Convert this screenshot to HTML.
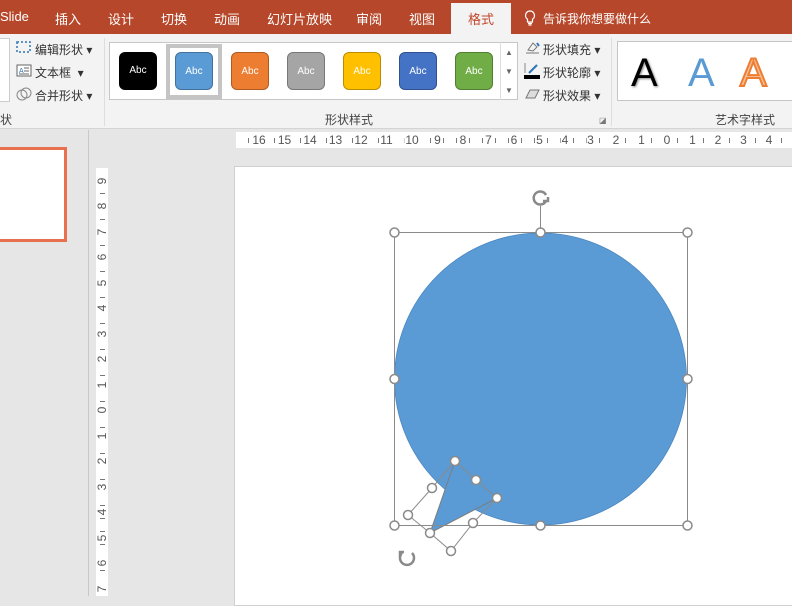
<!DOCTYPE html>
<html><head><meta charset="utf-8"><style>
*{margin:0;padding:0;box-sizing:border-box}
body{width:792px;height:596px;overflow:hidden;position:relative;background:#e6e6e6;font-family:"Liberation Sans","Noto Sans CJK SC",sans-serif;color:#333}
.abs{position:absolute}
.tabs{left:0;top:0;width:792px;height:34px;background:#b7472a}
.tab{position:absolute;top:9px;color:#fff;font-size:13px}
.ribbon{left:0;top:34px;width:792px;height:95px;background:#f3f3f3;border-bottom:1px solid #d4d4d4}
.btn{position:absolute;font-size:12px;color:#333}
.abc{position:absolute;width:38px;height:38px;border-radius:6px;color:#fff;font-size:10px;text-align:center;line-height:37px}
.lbl{position:absolute;font-size:12px;color:#444}
.hr{left:236px;top:132px;width:556px;height:16px;font-size:12px;color:#555}
.hr span{position:absolute;top:0;transform:translateX(-50%);line-height:16px;background:#fff;padding:0 1px}
.vr{left:96px;top:168px;width:12px;height:428px;font-size:12px;color:#555}
.vr span{position:absolute;left:0;width:12px;text-align:center;transform:translateY(-50%) rotate(-90deg);line-height:12px;background:#fff}
</style></head><body>
<div class="abs tabs">
<div class="tab" style="left:0">Slide</div>
<div class="tab" style="left:55px">插入</div>
<div class="tab" style="left:108px">设计</div>
<div class="tab" style="left:161px">切换</div>
<div class="tab" style="left:214px">动画</div>
<div class="tab" style="left:267px">幻灯片放映</div>
<div class="tab" style="left:356px">审阅</div>
<div class="tab" style="left:409px">视图</div>
<div class="abs" style="left:451px;top:3px;width:60px;height:31px;background:#f3f3f3"></div>
<div class="tab" style="left:468px;color:#c0462a">格式</div>
<svg class="abs" style="left:524px;top:10px" width="12" height="16" viewBox="0 0 12 16"><path d="M6 1a4.5 4.5 0 0 0-2.5 8.2V12h5V9.2A4.5 4.5 0 0 0 6 1zM4 13.5h4M4.5 15h3" fill="none" stroke="#fff" stroke-width="1.2"/></svg>
<div class="tab" style="left:543px;font-size:12px;top:10px">告诉我你想要做什么</div>
</div>
<div class="abs ribbon">
<div class="abs" style="left:0;top:4px;width:10px;height:64px;border:1px solid #ccc;border-left:none;background:#fff"></div>
<svg class="abs" style="left:16px;top:6px" width="16" height="14"><rect x="1" y="2" width="13" height="10" fill="none" stroke="#2e75b6" stroke-dasharray="2 2" stroke-width="1.5"/></svg>
<div class="btn" style="left:35px;top:7px">编辑形状 ▾</div>
<svg class="abs" style="left:16px;top:30px" width="16" height="14"><rect x="1" y="1" width="14" height="11" fill="#fff" stroke="#666"/><text x="3" y="9" font-size="7" fill="#2e75b6">A</text><path d="M8 4h5M8 7h5M3 10h10" stroke="#666"/></svg>
<div class="btn" style="left:35px;top:30px">文本框 &nbsp;▾</div>
<svg class="abs" style="left:16px;top:52px" width="16" height="16"><circle cx="6" cy="9" r="5" fill="none" stroke="#888"/><circle cx="10" cy="7" r="5" fill="none" stroke="#888"/></svg>
<div class="btn" style="left:35px;top:53px">合并形状 ▾</div>
<div class="lbl" style="left:0;top:77px">状</div>
<div class="abs" style="left:104px;top:4px;width:1px;height:88px;background:#ddd"></div>
<div class="abs" style="left:109px;top:8px;width:409px;height:58px;background:#fff;border:1px solid #c6c6c6"></div>
<div class="abs" style="left:500px;top:8px;width:1px;height:58px;background:#ddd"></div>
<div class="btn" style="left:505px;top:9px;font-size:8px;color:#666;line-height:19px">▲<br>▼<br>▼</div>
<div class="abs" style="left:166px;top:10px;width:56px;height:55px;border:4px solid #c4c4c4"></div>
<div class="abc" style="left:119px;top:18px;background:#000">Abc</div>
<div class="abc" style="left:175px;top:18px;background:#5b9bd5;border:1px solid #41719c">Abc</div>
<div class="abc" style="left:231px;top:18px;background:#ed7d31;border:1px solid #ae5a21">Abc</div>
<div class="abc" style="left:287px;top:18px;background:#a5a5a5;border:1px solid #787878">Abc</div>
<div class="abc" style="left:343px;top:18px;background:#ffc000;border:1px solid #bc8c00">Abc</div>
<div class="abc" style="left:399px;top:18px;background:#4472c4;border:1px solid #2f528f">Abc</div>
<div class="abc" style="left:455px;top:18px;background:#70ad47;border:1px solid #507e32">Abc</div>
<div class="lbl" style="left:325px;top:77px">形状样式</div>
<svg class="abs" style="left:523px;top:6px" width="18" height="16"><path d="M3 13h13M5 10l5-7 4 4-4 4z" fill="none" stroke="#777"/><path d="M14 3l2 3" stroke="#2e75b6" stroke-width="2"/></svg>
<div class="btn" style="left:543px;top:7px">形状填充 ▾</div>
<svg class="abs" style="left:523px;top:28px" width="18" height="18"><path d="M6 11l8-8" stroke="#2e75b6" stroke-width="2"/><path d="M2 1v10" stroke="#888"/><rect x="1" y="13" width="16" height="4" fill="#000"/></svg>
<div class="btn" style="left:543px;top:30px">形状轮廓 ▾</div>
<svg class="abs" style="left:523px;top:53px" width="18" height="14"><path d="M3 11l4-8h9l-4 8z" fill="#ddd" stroke="#777"/></svg>
<div class="btn" style="left:543px;top:53px">形状效果 ▾</div>
<div class="btn" style="left:599px;top:82px;font-size:8px;color:#777">◪</div>
<div class="abs" style="left:611px;top:4px;width:1px;height:88px;background:#ddd"></div>
<div class="abs" style="left:617px;top:7px;width:180px;height:60px;background:#fff;border:1px solid #c6c6c6"></div>
<div class="abs" style="left:631px;top:12px;font-size:40px;line-height:54px;color:#000;text-shadow:1px 1px 2px #888">A</div>
<div class="abs" style="left:688px;top:12px;font-size:40px;line-height:54px;color:#5b9bd5">A</div>
<div class="abs" style="left:740px;top:12px;font-size:40px;line-height:54px;color:#f8c09a;-webkit-text-stroke:2px #ed7d31">A</div>
<div class="lbl" style="left:715px;top:77px">艺术字样式</div>
</div>
<div class="abs" style="left:88px;top:130px;width:1px;height:466px;background:#c8c8c8"></div>
<div class="abs" style="left:-5px;top:147px;width:72px;height:95px;background:#fff;border:3px solid #e9704f"></div>
<div class="abs hr" style="background-color:#fff;background-image:repeating-linear-gradient(90deg,transparent 0 12px,#777 12px 13px,transparent 13px 12.75px);background-size:100% 5px;background-position:0 6px;background-repeat:repeat-x"></div>
<div class="abs hr">
<span style="left:23px">16</span><span style="left:48.5px">15</span><span style="left:74px">14</span><span style="left:99.5px">13</span><span style="left:125px">12</span><span style="left:150.5px">11</span><span style="left:176px">10</span><span style="left:201.5px">9</span><span style="left:227px">8</span><span style="left:252.5px">7</span><span style="left:278px">6</span><span style="left:303.5px">5</span><span style="left:329px">4</span><span style="left:354.5px">3</span><span style="left:380px">2</span><span style="left:405.5px">1</span><span style="left:431px">0</span><span style="left:456.5px">1</span><span style="left:482px">2</span><span style="left:507.5px">3</span><span style="left:533px">4</span>
</div>
<div class="abs vr" style="background-color:#fff;background-image:repeating-linear-gradient(180deg,transparent 0 12px,#777 12px 13px,transparent 13px 12.75px);background-size:5px 100%;background-position:4px 0;background-repeat:repeat-y"></div>
<div class="abs vr">
<span style="top:12.5px">9</span><span style="top:38px">8</span><span style="top:63.5px">7</span><span style="top:89px">6</span><span style="top:114.5px">5</span><span style="top:140px">4</span><span style="top:165.5px">3</span><span style="top:191px">2</span><span style="top:216.5px">1</span><span style="top:242px">0</span><span style="top:267.5px">1</span><span style="top:293px">2</span><span style="top:318.5px">3</span><span style="top:344px">4</span><span style="top:369.5px">5</span><span style="top:395px">6</span><span style="top:420.5px">7</span>
</div>
<div class="abs" style="left:234px;top:166px;width:560px;height:440px;background:#fff;border:1px solid #d0d0d0"></div>
<svg class="abs" style="left:0;top:0" width="792" height="596">
<circle cx="540.5" cy="379" r="146" fill="#5b9bd5" stroke="#4a86c0" stroke-width="0.8"/>
<path d="M455 461L497 498L430 533Z" fill="#5b9bd5"/>
<path d="M455 461L430 533L497 498" fill="none" stroke="#7c7c7c" stroke-width="1"/>
<rect x="394.5" y="232.5" width="293" height="293" fill="none" stroke="#8a8a8a" stroke-width="1"/>
<line x1="540.5" y1="206" x2="540.5" y2="232" stroke="#8a8a8a"/>
<path d="M455 461L476 480L497 498L473 523L451 551L430 533L408 515L432 488L455 461" fill="none" stroke="#8a8a8a"/>
<g fill="#fff" stroke="#8a8a8a" stroke-width="1.5">
<circle cx="394.5" cy="232.5" r="4.5"/><circle cx="540.5" cy="232.5" r="4.5"/><circle cx="687.5" cy="232.5" r="4.5"/>
<circle cx="394.5" cy="379" r="4.5"/><circle cx="687.5" cy="379" r="4.5"/>
<circle cx="394.5" cy="525.5" r="4.5"/><circle cx="540.5" cy="525.5" r="4.5"/><circle cx="687.5" cy="525.5" r="4.5"/>
<circle cx="455" cy="461" r="4.5"/><circle cx="476" cy="480" r="4.5"/><circle cx="497" cy="498" r="4.5"/><circle cx="473" cy="523" r="4.5"/><circle cx="451" cy="551" r="4.5"/><circle cx="430" cy="533" r="4.5"/><circle cx="408" cy="515" r="4.5"/><circle cx="432" cy="488" r="4.5"/>
</g>
<g fill="none" stroke="#8a8a8a" stroke-width="2.5">
<path d="M546 201a6.5 6.5 0 1 1 0-6"/><path d="M543 201h5v-4"/>
<path d="M412 553a7 7 0 1 1-10 0"/><path d="M404 552h-4v5"/>
</g>
</svg>
</body></html>
